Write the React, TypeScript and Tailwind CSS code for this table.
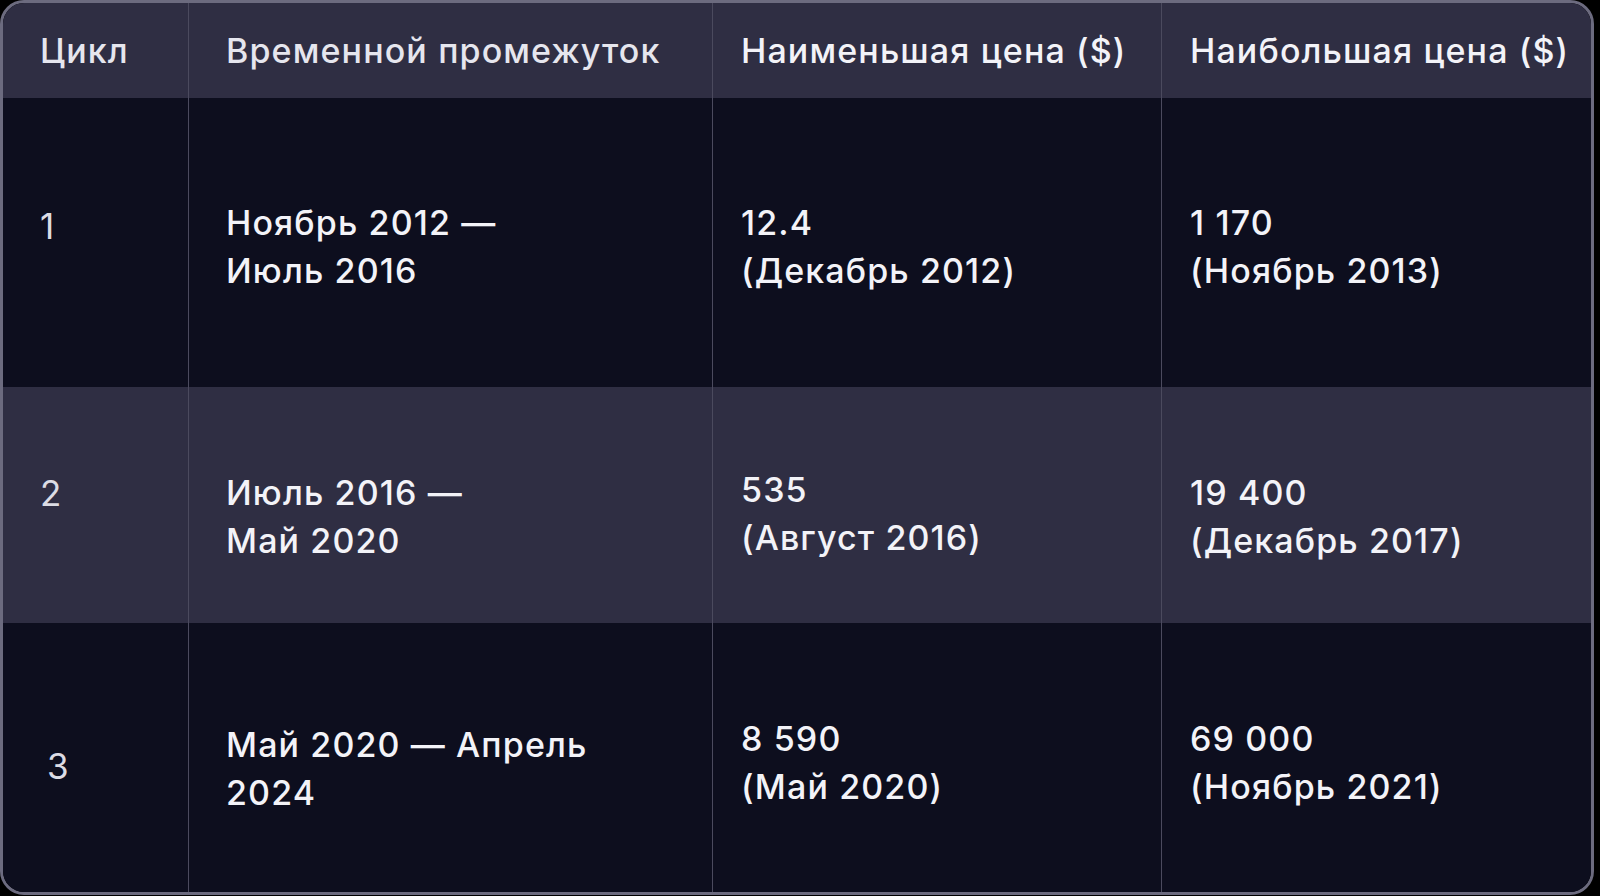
import React from "react";

type Row = {
  num: string;
  numClass: string;
  period: string[];
  periodClass: string;
  low: string[];
  lowClass: string;
  high: string[];
  highClass: string;
  bg: string;
  height: string;
};

const rows: Row[] = [
  {
    num: "1",
    numClass: "pt-[104px] pl-[37px]",
    period: ["Ноябрь 2012 —", "Июль 2016"],
    periodClass: "pt-[101px]",
    low: ["12.4", "(Декабрь 2012)"],
    lowClass: "pt-[101px]",
    high: ["1 170", "(Ноябрь 2013)"],
    highClass: "pt-[101px]",
    bg: "bg-[#0d0e1e]",
    height: "h-[289px]",
  },
  {
    num: "2",
    numClass: "pt-[82px] pl-[37px]",
    period: ["Июль 2016 —", "Май 2020"],
    periodClass: "pt-[82px]",
    low: ["535", "(Август 2016)"],
    lowClass: "pt-[79px]",
    high: ["19 400", "(Декабрь 2017)"],
    highClass: "pt-[82px]",
    bg: "bg-[#2f2e43]",
    height: "h-[236px]",
  },
  {
    num: "3",
    numClass: "pt-[119px] pl-[44px]",
    period: ["Май 2020 — Апрель", "2024"],
    periodClass: "pt-[98px]",
    low: ["8 590", "(Май 2020)"],
    lowClass: "pt-[92px]",
    high: ["69 000", "(Ноябрь 2021)"],
    highClass: "pt-[92px]",
    bg: "bg-[#0d0e1e]",
    height: "flex-1",
  },
];

const cellLine = "border-r border-[#4b4a5e]";

const Lines = ({ lines }: { lines: string[] }) => (
  <>
    {lines.map((l) => (
      <div key={l} className="whitespace-nowrap">
        {l}
      </div>
    ))}
  </>
);

export default function App() {
  return (
    <div
      className="h-[896px] w-[1600px] bg-black"
      style={{ fontFamily: "Inter, 'Noto Sans', sans-serif" }}
    >
      <div className="flex h-[895px] w-[1594px] flex-col overflow-hidden rounded-[24px] border-[3px] border-[#6c6b7f] text-[34px] font-medium leading-[48px] tracking-[0.033em] text-[#f3f3f8]">
        <div className="grid h-[95px] grid-cols-[186px_524px_449px_1fr] bg-[#2f2e43]">
          <div className={`${cellLine} flex items-center pl-[37px] text-[#e6e6ee]`}>Цикл</div>
          <div className={`${cellLine} flex items-center pl-[37px] text-[#e6e6ee]`}>
            Временной промежуток
          </div>
          <div className={`${cellLine} flex items-center pl-[28px]`}>Наименьшая цена ($)</div>
          <div className="flex items-center pl-[28px]">Наибольшая цена ($)</div>
        </div>
        {rows.map((r) => (
          <div
            key={r.num}
            className={`grid grid-cols-[186px_524px_449px_1fr] ${r.bg} ${r.height}`}
          >
            <div className={`${cellLine} ${r.numClass} text-[35px] font-normal text-[#dcdce4]`}>
              {r.num}
            </div>
            <div className={`${cellLine} ${r.periodClass} pl-[37px]`}>
              <Lines lines={r.period} />
            </div>
            <div className={`${cellLine} ${r.lowClass} pl-[28px]`}>
              <Lines lines={r.low} />
            </div>
            <div className={`${r.highClass} pl-[28px]`}>
              <Lines lines={r.high} />
            </div>
          </div>
        ))}
      </div>
    </div>
  );
}
